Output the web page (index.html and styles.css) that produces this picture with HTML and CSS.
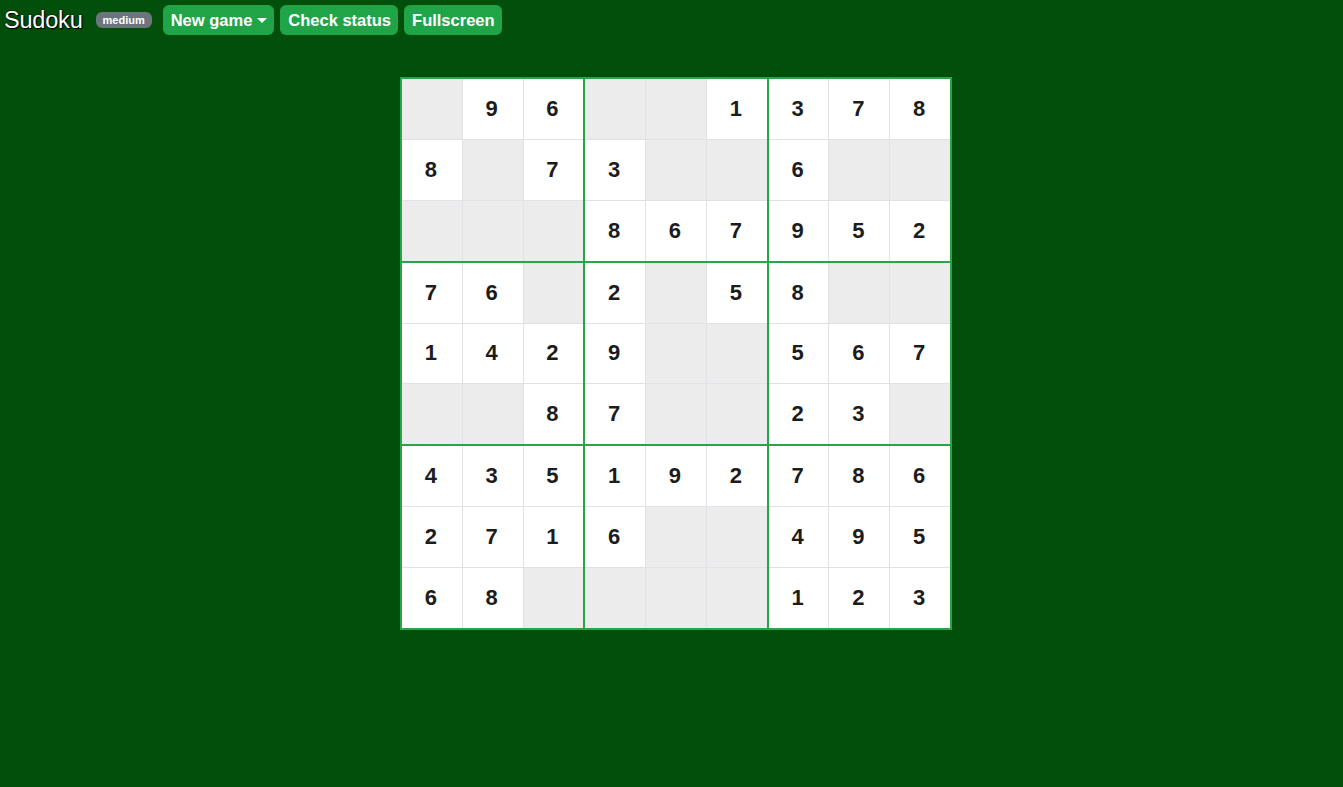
FILE: index.html
```html
<!DOCTYPE html>
<html lang="en">
<head>
<meta charset="utf-8">
<title>Sudoku</title>
<link rel="stylesheet" href="styles.css">
</head>
<body>
<header class="topbar">
  <h1 class="title">Sudoku</h1>
  <span class="badge">medium</span>
  <button class="btn">New game <span class="caret"></span></button>
  <button class="btn">Check status</button>
  <button class="btn">Fullscreen</button>
</header>
<main class="stage">
  <div class="board">
    <div class="box">
      <div class="cell empty"></div><div class="cell">9</div><div class="cell">6</div>
      <div class="cell">8</div><div class="cell empty"></div><div class="cell">7</div>
      <div class="cell empty"></div><div class="cell empty"></div><div class="cell empty"></div>
    </div>
    <div class="box">
      <div class="cell empty"></div><div class="cell empty"></div><div class="cell">1</div>
      <div class="cell">3</div><div class="cell empty"></div><div class="cell empty"></div>
      <div class="cell">8</div><div class="cell">6</div><div class="cell">7</div>
    </div>
    <div class="box">
      <div class="cell">3</div><div class="cell">7</div><div class="cell">8</div>
      <div class="cell">6</div><div class="cell empty"></div><div class="cell empty"></div>
      <div class="cell">9</div><div class="cell">5</div><div class="cell">2</div>
    </div>
    <div class="box">
      <div class="cell">7</div><div class="cell">6</div><div class="cell empty"></div>
      <div class="cell">1</div><div class="cell">4</div><div class="cell">2</div>
      <div class="cell empty"></div><div class="cell empty"></div><div class="cell">8</div>
    </div>
    <div class="box">
      <div class="cell">2</div><div class="cell empty"></div><div class="cell">5</div>
      <div class="cell">9</div><div class="cell empty"></div><div class="cell empty"></div>
      <div class="cell">7</div><div class="cell empty"></div><div class="cell empty"></div>
    </div>
    <div class="box">
      <div class="cell">8</div><div class="cell empty"></div><div class="cell empty"></div>
      <div class="cell">5</div><div class="cell">6</div><div class="cell">7</div>
      <div class="cell">2</div><div class="cell">3</div><div class="cell empty"></div>
    </div>
    <div class="box">
      <div class="cell">4</div><div class="cell">3</div><div class="cell">5</div>
      <div class="cell">2</div><div class="cell">7</div><div class="cell">1</div>
      <div class="cell">6</div><div class="cell">8</div><div class="cell empty"></div>
    </div>
    <div class="box">
      <div class="cell">1</div><div class="cell">9</div><div class="cell">2</div>
      <div class="cell">6</div><div class="cell empty"></div><div class="cell empty"></div>
      <div class="cell empty"></div><div class="cell empty"></div><div class="cell empty"></div>
    </div>
    <div class="box">
      <div class="cell">7</div><div class="cell">8</div><div class="cell">6</div>
      <div class="cell">4</div><div class="cell">9</div><div class="cell">5</div>
      <div class="cell">1</div><div class="cell">2</div><div class="cell">3</div>
    </div>
  </div>
</main>
</body>
</html>
```
FILE: styles.css
```css
* { box-sizing: border-box; }
html, body {
  margin: 0;
  padding: 0;
  height: 100%;
}
body {
  background: #014f0b;
  font-family: "Liberation Sans", Arial, sans-serif;
  color: #fff;
}
.topbar {
  display: flex;
  align-items: flex-start;
  height: 40px;
  padding: 5px 0 0 4px;
}
.title {
  margin: 0;
  font-size: 23.5px;
  font-weight: 400;
  line-height: 30px;
  letter-spacing: -0.2px;
  color: #fff;
  text-shadow: 0 0 2px #000, 1px 1px 1px #000;
}
.badge {
  margin: 7px 11px 0 13px;
  background: #6c757d;
  color: #fff;
  font-size: 11px;
  font-weight: 700;
  line-height: 16px;
  height: 16px;
  padding: 0 7px;
  border-radius: 6px;
}
.btn {
  font-family: "Liberation Sans", Arial, sans-serif;
  font-size: 16.5px;
  font-weight: 700;
  color: #fff;
  background: #1fa548;
  border: 0;
  border-radius: 6px;
  height: 30px;
  padding: 0 7px 0 8px;
  margin-right: 6px;
  display: inline-flex;
  align-items: center;
  cursor: pointer;
}
.caret {
  display: inline-block;
  width: 0;
  height: 0;
  margin-left: 5px;
  border-left: 5px solid transparent;
  border-right: 5px solid transparent;
  border-top: 5px solid #fff;
}
.stage {
  display: flex;
  justify-content: center;
  padding: 37px 0 0 9px;
}
.board {
  width: 552px;
  height: 553px;
  border: 2px solid #26a649;
  background: #26a649;
  display: grid;
  grid-template-columns: repeat(3, 1fr);
  grid-template-rows: repeat(3, 1fr);
  gap: 2px;
}
.box {
  display: grid;
  grid-template-columns: repeat(3, 1fr);
  grid-template-rows: repeat(3, 1fr);
  gap: 1px;
  background: #dfe3e8;
}
.cell {
  background: #fff;
  color: #1c1c1c;
  font-size: 22px;
  font-weight: 700;
  display: flex;
  align-items: center;
  justify-content: center;
  padding-right: 2px;
}
.cell.empty {
  background: #ececec;
}
```
